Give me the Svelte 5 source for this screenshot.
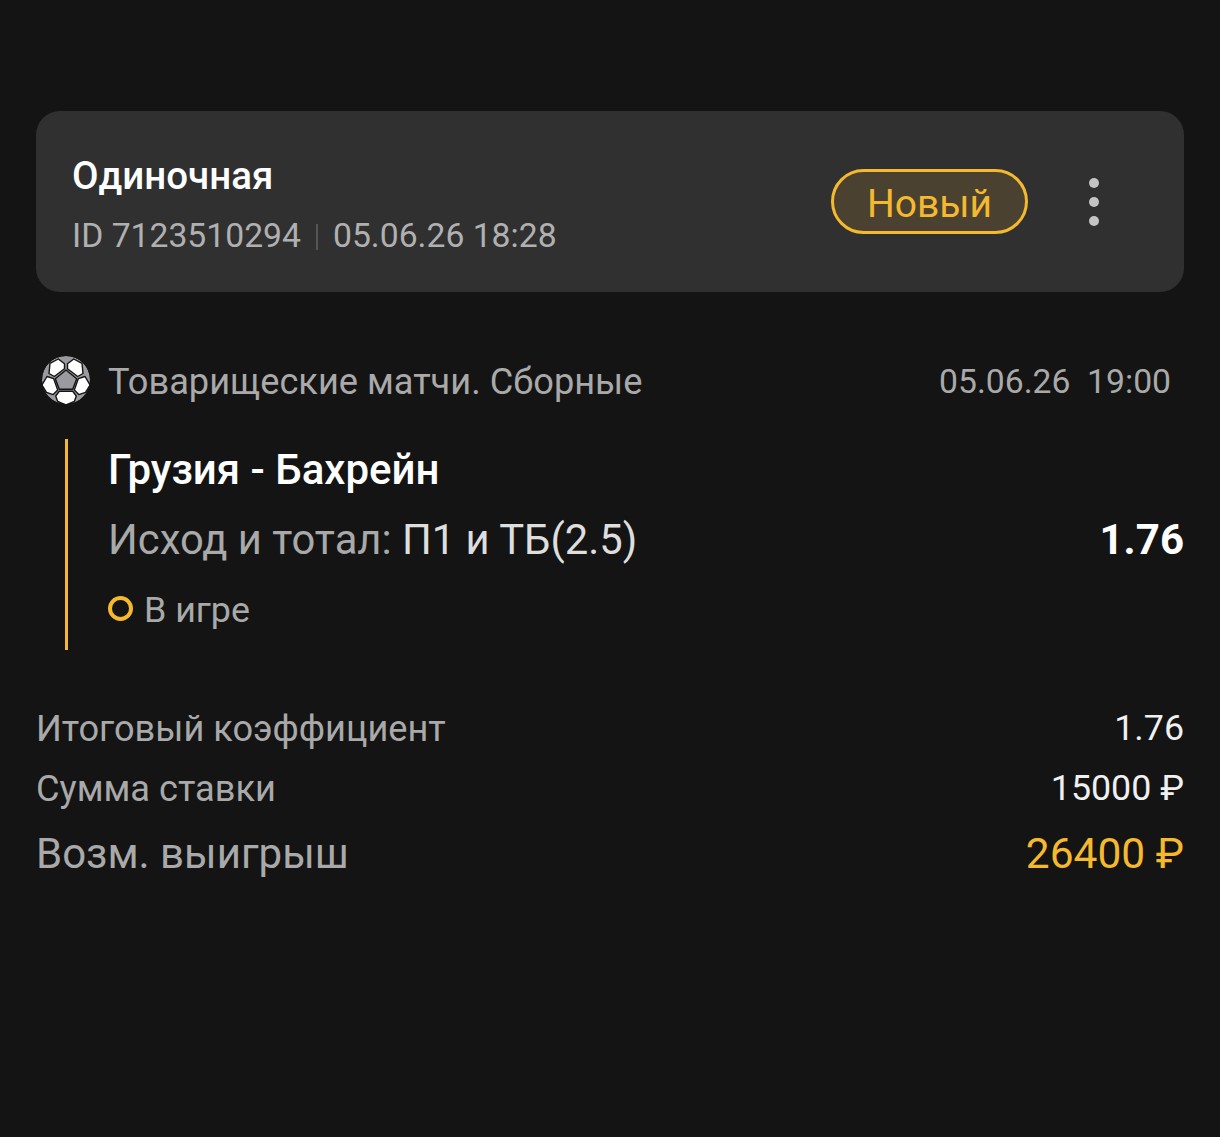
<script>
	const totals = [
		{ label: 'Итоговый коэффициент', value: '1.76' },
		{ label: 'Сумма ставки', value: '15000 ₽' }
	];
</script>

<div class="page">
	<section class="card">
		<div class="card-info">
			<div class="card-title">Одиночная</div>
			<div class="card-meta">
				<span>ID 7123510294</span>
				<i class="sep"></i>
				<span>05.06.26 18:28</span>
			</div>
		</div>
		<div class="badge">Новый</div>
		<div class="more"><b></b><b></b><b></b></div>
	</section>

	<div class="league">
		<svg class="ball" viewBox="0 0 48 48" width="48" height="48">
			<circle cx="24" cy="24" r="24" fill="#9a9a9f" />
			<g fill="#fff" stroke="#141414" stroke-width="1.4" stroke-linejoin="round">
				<path d="M24 14l10.700 8.700-4 10.600H17.300l-4-10.600z" fill="#9a9a9f" />
				<path d="M8 7.300L16.300 3l6.200 4.800v5L12.300 20.500 7 17.500z" />
				<path d="M40 7.300L31.700 3 25.500 7.800v5l10.200 7.700 5.300-3z" />
				<path d="M5 20.500l6.700 2.200 4 11.400-4.500 4.500-6.700-2.300L0 29z" />
				<path d="M43 20.500l-6.700 2.200-4 11.400 4.500 4.500 6.700-2.300L48 29z" />
				<path d="M17.300 35.300h13.400l3.600 4.700-2 5.400L24 49l-8.300-3.600-2-5.400z" />
			</g>
			<circle cx="24" cy="24" r="24.500" fill="none" stroke="#141414" stroke-width="1" />
		</svg>
		<span class="league-name">Товарищеские матчи. Сборные</span>
		<span class="league-date">05.06.26&nbsp; 19:00</span>
	</div>

	<div class="event">
		<div class="teams">Грузия - Бахрейн</div>
		<div class="market">
			<span class="market-name">Исход и тотал: <em>П1 и ТБ(2.5)</em></span>
			<strong>1.76</strong>
		</div>
		<div class="status"><i class="ring"></i>В игре</div>
	</div>

	<div class="totals">
		{#each totals as row}
			<div class="row">
				<span>{row.label}</span>
				<span class="value">{row.value}</span>
			</div>
		{/each}
		<div class="row big">
			<span>Возм. выигрыш</span>
			<span class="win">26400 ₽</span>
		</div>
	</div>
</div>

<style>
	:global(body) {
		background: #141414;
	}

	.page {
		box-sizing: border-box;
		height: 1137px;
		padding: 111px 36px 0;
		background: #141414;
		font-family: Roboto, 'Noto Sans', sans-serif;
		color: #a9a9a9;
		overflow: hidden;
	}

	.card {
		display: flex;
		align-items: center;
		height: 181px;
		box-sizing: border-box;
		padding: 0 85px 0 36px;
		background: #303030;
		border-radius: 24px;
	}

	.card-info {
		flex: 1;
		padding-top: 7px;
	}

	.card-title {
		font-size: 38.500px;
		line-height: 42px;
		font-weight: 500;
		color: #fff;
	}

	.card-meta {
		display: flex;
		align-items: center;
		margin-top: 19px;
		font-size: 33.700px;
		line-height: 40px;
		color: #b0b0b0;
	}

	.sep {
		width: 2px;
		height: 26px;
		margin: 2px 15px 0;
		background: #555;
	}

	.badge {
		box-sizing: border-box;
		width: 197px;
		height: 65px;
		margin-right: 61px;
		border: 3px solid #f4b92e;
		border-radius: 33px;
		background: #4a4130;
		color: #f4b92e;
		font-size: 39px;
		line-height: 64px;
		text-align: center;
	}

	.more {
		display: flex;
		flex-direction: column;
		gap: 9px;
	}

	.more b {
		width: 10px;
		height: 10px;
		border-radius: 50%;
		background: #c4c4c4;
	}

	.league {
		display: flex;
		align-items: center;
		margin: 64px 13px 0 6px;
		height: 48px;
	}

	.ball {
		flex: none;
	}

	.league-name {
		flex: 1;
		margin-left: 18px;
		font-size: 36.200px;
		padding-top: 2px;
	}

	.league-date {
		font-size: 33.700px;
		padding-top: 2px;
	}

	.event {
		box-sizing: border-box;
		height: 211px;
		margin: 35px 0 0 29px;
		padding: 8px 0 0 40px;
		border-left: 3px solid #f4b92e;
	}

	.teams {
		font-size: 42px;
		line-height: 46px;
		font-weight: 500;
		color: #fff;
	}

	.market {
		display: flex;
		justify-content: space-between;
		align-items: center;
		margin-top: 23px;
		font-size: 41.750px;
		line-height: 48px;
	}

	.market em {
		font-style: normal;
		color: #dedede;
	}

	.market strong {
		font-size: 42px;
		font-weight: 700;
		color: #fff;
	}

	.status {
		display: flex;
		align-items: center;
		margin-top: 26px;
		font-size: 35.800px;
		line-height: 40px;
	}

	.ring {
		box-sizing: border-box;
		width: 25px;
		height: 25px;
		margin: -4px 11px 0 0;
		border: 4px solid #f4b92e;
		border-radius: 50%;
	}

	.totals {
		margin-top: 48px;
	}

	.row {
		display: flex;
		justify-content: space-between;
		align-items: center;
		height: 60px;
		font-size: 36.200px;
	}

	.row .value {
		font-size: 35.800px;
		color: #f0f0f0;
	}

	.row.big {
		height: 70px;
		font-size: 42px;
	}

	.win {
		font-size: 42.500px;
		color: #f4b92e;
	}
</style>
